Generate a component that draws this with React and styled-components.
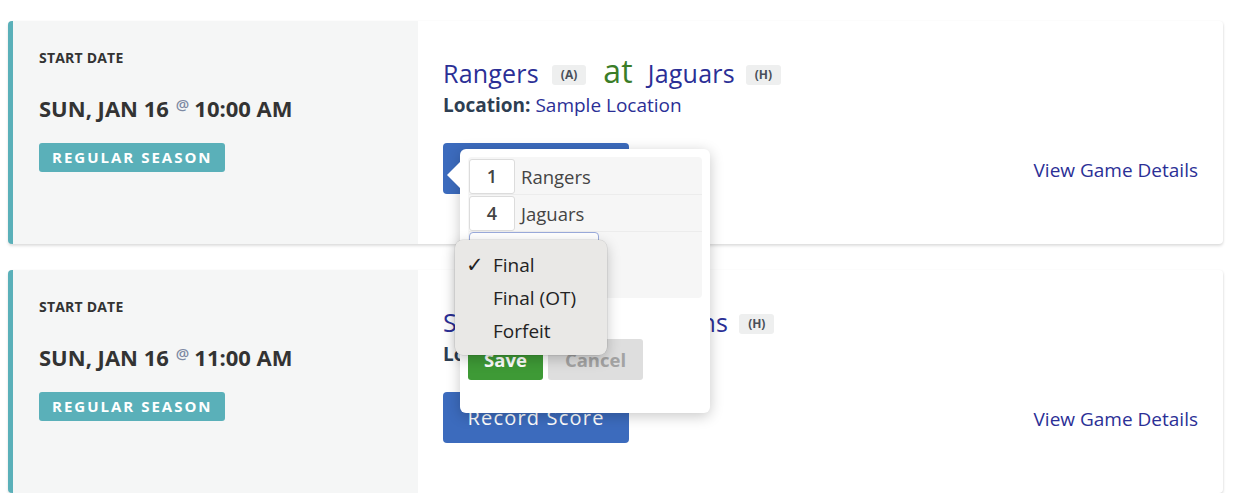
import React from "react";
import styled, { createGlobalStyle } from "styled-components";

const Global = createGlobalStyle`
  html, body { margin: 0; padding: 0; background: #fff; }
  body { font-family: "Open Sans", "Noto Sans", sans-serif; }
  * { box-sizing: border-box; }
`;

const Page = styled.div`
  display: flex;
  flex-direction: column;
  gap: 26px;
  padding: 21px 17px 0 8px;
  width: 1240px;
`;

const Card = styled.div`
  display: flex;
  height: 223px;
  border-left: 5px solid #5ab0b9;
  border-radius: 4px;
  background: #fff;
  box-shadow: 0 2px 3px rgba(0, 0, 0, 0.13), 1px 0 2px rgba(0, 0, 0, 0.04);
  position: relative;
`;

const DatePanel = styled.div`
  width: 405px;
  flex: none;
  background: #f5f6f6;
  padding: 28px 0 0 26px;
  display: flex;
  flex-direction: column;
  align-items: flex-start;
`;

const SmallLabel = styled.div`
  font-size: 14px;
  font-weight: 700;
  line-height: 18px;
  color: #333;
  letter-spacing: 0.2px;
`;

const DateLine = styled.div`
  margin-top: 26px;
  font-size: 22px;
  font-weight: 700;
  line-height: 30px;
  color: #333;
  white-space: nowrap;
`;

const At = styled.span`
  font-size: 15px;
  font-weight: 600;
  line-height: 0;
  color: #7d8aa3;
  vertical-align: 7px;
  margin: 0 5px 0 7px;
`;

const SeasonBadge = styled.div`
  margin-top: 20px;
  height: 29px;
  padding: 0 12px 0 13px;
  background: #5ab0b9;
  border-radius: 3px;
  color: #fff;
  font-size: 15px;
  font-weight: 700;
  letter-spacing: 2px;
  line-height: 29px;
`;

const MatchPanel = styled.div`
  flex: 1;
  padding: 36px 25px 0 25px;
  display: flex;
  flex-direction: column;
`;

const Title = styled.div`
  display: flex;
  align-items: center;
  font-size: 25px;
  line-height: 32px;
  color: #2b2f96;
  white-space: nowrap;
  letter-spacing: 0.2px;
`;

const SideTag = styled.span`
  display: inline-block;
  margin: 3px 0 0 ${(p) => p.$gap}px;
  padding: 0 9px;
  height: 20px;
  line-height: 20px;
  background: #eeefef;
  border-radius: 3px;
  color: #4a4f5a;
  font-size: 12px;
  font-weight: 700;
  letter-spacing: 0;
`;

const AtWord = styled.span`
  color: #3a7d28;
  font-size: 32px;
  margin: -5px 15px 0 17px;
`;

const LocationLine = styled.div`
  margin-top: 4px;
  font-size: 19px;
  line-height: 24px;
  color: #2b2f96;
  b {
    font-weight: 700;
    color: #2e3e52;
  }
`;

const ActionRow = styled.div`
  margin-top: 26px;
  display: flex;
  align-items: center;
  justify-content: space-between;
`;

const ButtonWrap = styled.div`
  position: relative;
`;

const RecordButton = styled.button`
  width: 186px;
  height: 51px;
  border: none;
  border-radius: 4px;
  background: #3c6bbd;
  color: #fff;
  font-family: inherit;
  font-size: 20px;
  letter-spacing: 1.2px;
  padding: 0;
`;

const DetailsLink = styled.a`
  font-size: 19px;
  color: #2b2f96;
  text-decoration: none;
  margin-top: 3px;
`;

const Popover = styled.div`
  position: absolute;
  left: 17px;
  top: 6px;
  z-index: 20;
  width: 250px;
  height: 264px;
  background: #fff;
  border-radius: 6px;
  box-shadow: 0 3px 14px rgba(0, 0, 0, 0.22);
  padding: 8px;
  &::before {
    content: "";
    position: absolute;
    left: -13px;
    top: 13px;
    border-top: 13px solid transparent;
    border-bottom: 13px solid transparent;
    border-right: 13px solid #fff;
  }
`;

const ScoreSheet = styled.div`
  background: #f6f6f6;
  border-radius: 4px;
  height: 141px;
  padding: 1px 0 0 1px;
`;

const ScoreRow = styled.div`
  display: flex;
  align-items: center;
  gap: 6px;
  height: 37px;
  border-bottom: 1px solid #ececec;
`;

const ScoreBox = styled.div`
  width: 46px;
  height: 35px;
  border: 1px solid #dcdcdc;
  border-radius: 3px;
  background: #fff;
  text-align: center;
  line-height: 33px;
  font-size: 18px;
  font-weight: 600;
  color: #444;
`;

const TeamLabel = styled.span`
  font-size: 18.5px;
  color: #444;
`;

const StatusSelect = styled.div`
  width: 130px;
  height: 30px;
  border: 1px solid #9aaadb;
  border-radius: 4px;
  background: #fff;
`;

const ButtonRow = styled.div`
  display: flex;
  gap: 5px;
  margin-top: 41px;
`;

const FormButton = styled.button`
  height: 41px;
  width: ${(p) => p.$w}px;
  border: none;
  border-radius: 3px;
  background: ${(p) => (p.$primary ? "#3e9a36" : "#dedede")};
  color: ${(p) => (p.$primary ? "#fff" : "#a3a3a3")};
  font-family: inherit;
  font-size: 18.5px;
  font-weight: 700;
  padding: 0;
`;

const Dropdown = styled.div`
  position: absolute;
  left: -5px;
  top: 91px;
  width: 152px;
  padding: 8px 0;
  background: #e9e8e6;
  border-radius: 8px;
  box-shadow: 0 4px 14px rgba(0, 0, 0, 0.22), 0 0 0 0.5px rgba(0, 0, 0, 0.12);
  z-index: 2;
`;

const Option = styled.div`
  display: flex;
  align-items: center;
  height: 33px;
  font-size: 19px;
  color: #222;
`;

const Check = styled.span`
  width: 38px;
  padding-left: 11px;
  font-family: "DejaVu Sans", sans-serif;
  font-size: 21px;
  font-weight: 700;
  color: #222;
`;

const games = [
  { time: "10:00 AM", away: "Rangers", home: "Jaguars", open: true },
  { time: "11:00 AM", away: "Spartans", home: "Titans", open: false },
];

function ScorePopover({ away, home }) {
  return (
    <Popover>
      <ScoreSheet>
        <ScoreRow>
          <ScoreBox>1</ScoreBox>
          <TeamLabel>{away}</TeamLabel>
        </ScoreRow>
        <ScoreRow>
          <ScoreBox>4</ScoreBox>
          <TeamLabel>{home}</TeamLabel>
        </ScoreRow>
        <StatusSelect />
      </ScoreSheet>
      <ButtonRow>
        <FormButton $primary $w={75}>Save</FormButton>
        <FormButton $w={95}>Cancel</FormButton>
      </ButtonRow>
      <Dropdown>
        <Option>
          <Check>✓</Check>Final
        </Option>
        <Option>
          <Check />Final (OT)
        </Option>
        <Option>
          <Check />Forfeit
        </Option>
      </Dropdown>
    </Popover>
  );
}

export default function App() {
  return (
    <>
      <Global />
      <Page>
        {games.map((g) => (
          <Card key={g.time}>
            <DatePanel>
              <SmallLabel>START DATE</SmallLabel>
              <DateLine>
                SUN, JAN 16<At>@</At>
                {g.time}
              </DateLine>
              <SeasonBadge>REGULAR SEASON</SeasonBadge>
            </DatePanel>
            <MatchPanel>
              <Title>
                {g.away}
                <SideTag $gap={13}>(A)</SideTag>
                <AtWord>at</AtWord>
                {g.home}
                <SideTag $gap={11}>(H)</SideTag>
              </Title>
              <LocationLine>
                <b>Location:</b> Sample Location
              </LocationLine>
              <ActionRow>
                <ButtonWrap>
                  <RecordButton>Record Score</RecordButton>
                  {g.open && <ScorePopover away={g.away} home={g.home} />}
                </ButtonWrap>
                <DetailsLink href="#">View Game Details</DetailsLink>
              </ActionRow>
            </MatchPanel>
          </Card>
        ))}
      </Page>
    </>
  );
}
